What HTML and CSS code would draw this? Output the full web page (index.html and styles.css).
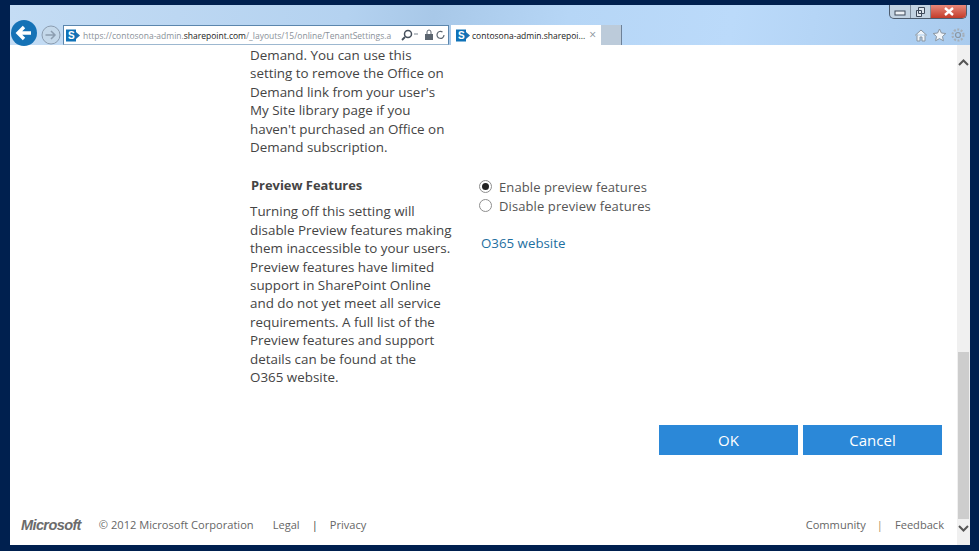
FILE: index.html
```html
<!DOCTYPE html>
<html lang="en">
<head>
<meta charset="utf-8">
<title>SharePoint Online settings</title>
<link rel="stylesheet" href="styles.css">
</head>
<body>
<div class="window">
  <header class="toolbar">
    <div class="caption-buttons">
      <span class="cap cap-min"><svg width="12" height="8" viewBox="0 0 12 8"><rect x="1" y="3" width="10" height="4" fill="#eef2f6" stroke="#3f4a5a"/></svg></span>
      <span class="cap cap-max"><svg width="11" height="10" viewBox="0 0 11 10"><path d="M3.5 .5h6v6h-6zM1.5 3.5h5v6h-5z" fill="#dfe7ef" stroke="#3f4a5a"/></svg></span>
      <span class="cap cap-close"><svg width="12" height="9" viewBox="0 0 12 9"><path d="M2 1l8 7M10 1l-8 7" stroke="#fff" stroke-width="2.4"/></svg></span>
    </div>
    <div class="nav">
      <span class="back"><svg width="26" height="26" viewBox="0 0 26 26"><path d="M20 13H8M13 7l-6 6 6 6" fill="none" stroke="#fff" stroke-width="3.4"/></svg></span>
      <span class="forward"><svg width="20" height="20" viewBox="0 0 20 20"><circle cx="10" cy="10" r="9" fill="#c4d8ea" stroke="#8c9db0"/><path d="M4.500 10h9M10 6l4 4-4 4" fill="none" stroke="#8c9db0" stroke-width="1.500"/></svg></span>
      <div class="address">
        <svg class="sp" width="15" height="13" viewBox="0 0 15 13"><path d="M10 3l4 3.500-4 3.500z" fill="#1d6fb0"/><rect width="10" height="12" y=".5" fill="#0f72b8"/><text x="2" y="10" class="sp-letter">S</text></svg>
        <span class="url">https://contosona-admin.<b>sharepoint.com</b>/_layouts/15/online/TenantSettings.a</span>
        <svg class="addr-icon" width="44" height="12" viewBox="0 0 44 12"><circle cx="7" cy="5" r="3.500" fill="none" stroke="#46505c" stroke-width="1.500"/><path d="M4 8L1 11" stroke="#46505c" stroke-width="1.800"/><path d="M13 5h4" stroke="#7a8590"/><rect x="24" y="5" width="8" height="6" fill="#5c6670"/><path d="M26 5V3a2 2 0 0 1 4 0v2" fill="none" stroke="#5c6670"/><path d="M43 6a3.500 3.500 0 1 1-1.500-3" fill="none" stroke="#5c6670" stroke-width="1.200"/></svg>
      </div>
      <div class="tab">
        <svg class="sp" width="15" height="13" viewBox="0 0 15 13"><path d="M10 3l4 3.500-4 3.500z" fill="#1d6fb0"/><rect width="10" height="12" y=".5" fill="#0f72b8"/><text x="2" y="10" class="sp-letter">S</text></svg>
        <span class="tab-title">contosona-admin.sharepoi...</span>
        <span class="tab-close">×</span>
      </div>
      <span class="new-tab"></span>
      <div class="tools">
        <svg width="14" height="13" viewBox="0 0 14 13"><path d="M1 6.500L7 1l6 5.500M3 5.500V12h3V8h2v4h3V5.500" fill="#f0f5fa" stroke="#8b96a1"/></svg>
        <svg width="15" height="14" viewBox="0 0 15 14"><path d="M7.500 1l1.900 4 4.400.5-3.300 3 .9 4.300-3.900-2.200-3.900 2.200.9-4.300-3.300-3 4.400-.5z" fill="#f0f5fa" stroke="#8b96a1"/></svg>
        <svg width="14" height="14" viewBox="0 0 14 14"><circle cx="7" cy="7" r="2.500" fill="none" stroke="#8b96a1" stroke-width="1.200"/><circle cx="7" cy="7" r="5.500" fill="none" stroke="#a5afb9" stroke-width="2.200" stroke-dasharray="2 1.500"/></svg>
      </div>
    </div>
  </header>
  <div class="viewport">
    <main class="page">
      <div class="settings">
        <p class="desc first">Demand. You can use this<br>setting to remove the Office on<br>Demand link from your user's<br>My Site library page if you<br>haven't purchased an Office on<br>Demand subscription.</p>
        <div class="section">
          <div class="section-left">
            <h2 class="section-title">Preview Features</h2>
            <p class="desc">Turning off this setting will<br>disable Preview features making<br>them inaccessible to your users.<br>Preview features have limited<br>support in SharePoint Online<br>and do not yet meet all service<br>requirements. A full list of the<br>Preview features and support<br>details can be found at the<br>O365 website.</p>
          </div>
          <div class="section-right">
            <div class="option"><span class="radio radio-on"></span><span class="option-label">Enable preview features</span></div>
            <div class="option"><span class="radio"></span><span class="option-label">Disable preview features</span></div>
            <a class="site-link" href="#">O365 website</a>
          </div>
        </div>
        <div class="actions">
          <button class="btn" type="button">OK</button>
          <button class="btn" type="button">Cancel</button>
        </div>
      </div>
      <footer class="footer">
        <div class="footer-left">
          <span class="ms-logo">Microsoft</span>
          <span>© 2012 Microsoft Corporation</span>
          <a class="foot-legal" href="#">Legal</a>
          <span class="sep">|</span>
          <a href="#">Privacy</a>
        </div>
        <div class="footer-right">
          <a href="#">Community</a>
          <span class="sep sep-tan">|</span>
          <a href="#">Feedback</a>
        </div>
      </footer>
    </main>
    <aside class="scrollbar">
      <svg class="arrow" width="11" height="7" viewBox="0 0 11 7"><path d="M1 6l4.500-4.500L10 6" fill="none" stroke="#555" stroke-width="2"/></svg>
      <span class="thumb"></span>
      <svg class="arrow" width="11" height="7" viewBox="0 0 11 7"><path d="M1 1l4.500 4.500L10 1" fill="none" stroke="#555" stroke-width="2"/></svg>
    </aside>
  </div>
</div>
</body>
</html>
```

FILE: styles.css
```css
* { box-sizing: border-box; }
html, body { margin: 0; height: 100%; }
body {
  background: #00204f;
  font-family: "Open Sans", "Liberation Sans", sans-serif;
  color: #444;
  overflow: hidden;
}
.window {
  width: 979px;
  height: 551px;
  padding: 5px 9px 6px 10px;
  display: flex;
  flex-direction: column;
}
.toolbar {
  height: 40px;
  flex: none;
  position: relative;
  background: linear-gradient(100deg, #c4dcf4 0%, #b4d2f0 35%, #a8c8e8 44%, #b6d6f6 58%, #bbdafa 75%, #a9cbee 100%);
  display: flex;
  flex-direction: column;
  justify-content: flex-end;
}
.caption-buttons {
  position: absolute;
  top: 0;
  right: 3px;
  width: 78px;
  height: 14px;
  display: flex;
  border: 1px solid #4d5c6e;
  border-top: 0;
  border-radius: 0 0 5px 5px;
  overflow: hidden;
  background: #c3d3e2;
}
.cap { display: flex; align-items: center; justify-content: center; }
.cap-min { width: 21px; border-right: 1px solid #7d8b9a; }
.cap-max { width: 20px; border-right: 1px solid #7d8b9a; }
.cap-close { flex: 1; background: linear-gradient(#e8887a, #c33c2a); }
.nav {
  height: 20px;
  display: flex;
  align-items: flex-end;
  position: relative;
}
.back {
  width: 26px;
  height: 26px;
  border-radius: 50%;
  background: #1572b6;
  flex: none;
  margin: 0 4px 0 1px;
  position: relative;
  top: 1px;
  display: flex;
}
.forward { width: 20px; height: 20px; flex: none; align-self: center; margin-right: 2px; }
.address {
  width: 386px;
  height: 20px;
  background: #fff;
  border: 1px solid #5b86ad;
  border-bottom-color: #9db8d0;
  display: flex;
  align-items: center;
  padding-left: 2px;
  flex: none;
  margin-right: 2px;
}
.sp { flex: none; }
.sp-letter {
  fill: #fff;
  font-family: "Liberation Sans", sans-serif;
  font-size: 10px;
  font-weight: 700;
}
.url {
  font-size: 8.5px;
  color: #8a9199;
  margin-left: 2px;
  white-space: nowrap;
  flex: 1;
  min-width: 0;
}
.url b { color: #222; font-weight: 400; }
.addr-icon { flex: none; margin-right: 3px; }
.tab {
  width: 150px;
  height: 20px;
  background: #fff;
  display: flex;
  align-items: center;
  padding-left: 5px;
  flex: none;
}
.tab-title {
  font-size: 8.5px;
  color: #222;
  margin-left: 1px;
  white-space: nowrap;
}
.tab-close { font-size: 12px; color: #8a929a; margin-left: 4px; line-height: 1; }
.new-tab {
  width: 21px;
  height: 20px;
  background: #bccbda;
  border-right: 1px solid #6d8198;
  flex: none;
}
.tools {
  margin-left: auto;
  margin-right: 5px;
  align-self: center;
  display: flex;
  gap: 4px;
  align-items: center;
}
.viewport {
  flex: 1;
  min-height: 0;
  display: flex;
  background: #fff;
}
.page {
  flex: 1;
  min-width: 0;
  display: flex;
  flex-direction: column;
  padding-left: 240px;
}
.settings { flex: 1; padding-top: 1px; }
.desc {
  margin: 0;
  font-size: 13.4px;
  line-height: 18.4px;
  color: #444;
  white-space: nowrap;
}
.section { display: flex; margin-top: 20px; }
.section-left { width: 230px; flex: none; }
.section-title {
  margin: 0 0 8px 1px;
  font-size: 12.9px;
  line-height: 18px;
  font-weight: 700;
  color: #444;
}
.section-right { display: flex; flex-direction: column; margin-top: 1px; }
.option { display: flex; align-items: center; height: 19px; }
.radio {
  width: 13px;
  height: 13px;
  border-radius: 50%;
  border: 1px solid #8e8e8e;
  background: #fff;
  margin: 0 7px 0 -1px;
  flex: none;
  display: flex;
  align-items: center;
  justify-content: center;
}
.radio-on::after {
  content: "";
  width: 7px;
  height: 7px;
  border-radius: 50%;
  background: #222;
}
.option-label { font-size: 13px; color: #555; white-space: nowrap; letter-spacing: .1px; }
.site-link {
  margin: 19px 0 0 1px;
  font-size: 13.3px;
  line-height: 18px;
  color: #1e6f9f;
  text-decoration: none;
}
.actions {
  display: flex;
  justify-content: flex-end;
  gap: 5px;
  padding-right: 15px;
  margin-top: 38px;
}
.btn {
  width: 139px;
  height: 30px;
  border: 0;
  padding: 0;
  background: #2b88d8;
  color: #fff;
  font: 15px "Open Sans", "Liberation Sans", sans-serif;
}
.footer {
  height: 41px;
  flex: none;
  margin-left: -230px;
  padding-right: 13px;
  display: flex;
  justify-content: space-between;
  align-items: center;
  font-size: 11.1px;
  color: #666;
}
.footer a { color: #666; text-decoration: none; }
.footer-left, .footer-right { display: flex; align-items: center; }
.ms-logo {
  font-family: "Liberation Sans", sans-serif;
  font-weight: 700;
  font-style: italic;
  font-size: 14.500px;
  letter-spacing: -.6px;
  color: #6b6b6b;
  margin: 0 18px 0 1px;
}
.foot-legal { margin-left: 19px; }
.sep { margin: 0 12px; color: #444; }
.sep-tan { color: #a98d5e; margin: 0 12px 0 11px; }
.scrollbar {
  width: 13px;
  flex: none;
  background: #f0f0f0;
  display: flex;
  flex-direction: column;
  align-items: center;
  padding: 14px 1px 13px;
}
.arrow { flex: none; }
.thumb {
  width: 11px;
  height: 167px;
  background: #cdcdcd;
  margin-top: auto;
  margin-bottom: 6px;
}
```
